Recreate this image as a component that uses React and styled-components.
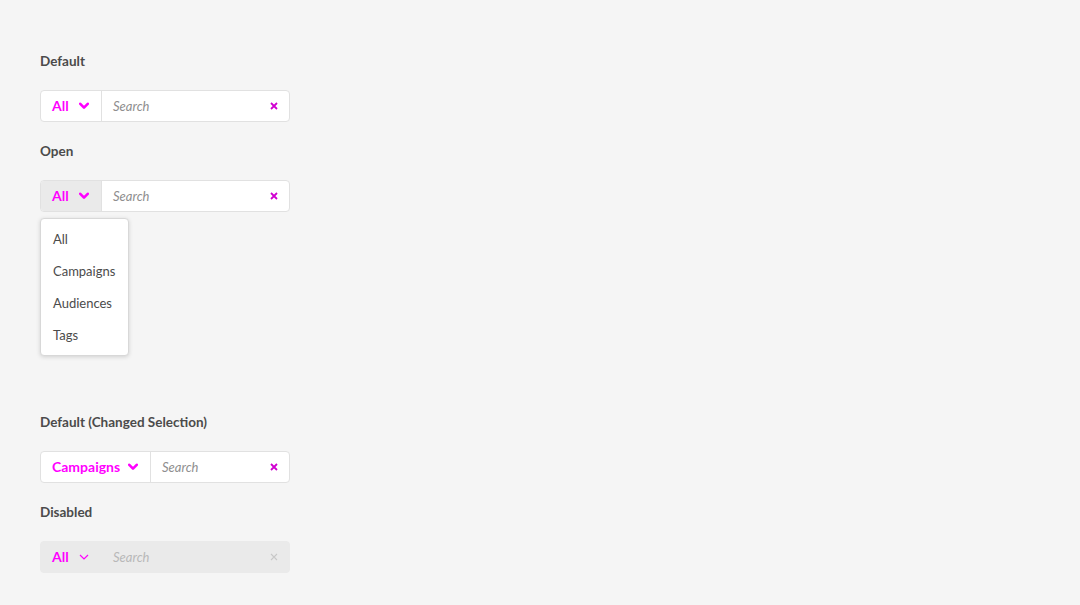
import React from "react";
import styled, { createGlobalStyle, css } from "styled-components";

const Global = createGlobalStyle`
  html, body { margin: 0; padding: 0; background: #f5f5f5; }
  body { font-family: Lato, "Open Sans", sans-serif; }
`;

const Page = styled.div`
  padding: 52px 40px;
  display: flex;
  flex-direction: column;
  gap: 20px;
`;

const Label = styled.div`
  font-size: 13.5px;
  font-weight: 700;
  color: #4b4b4b;
  line-height: 18px;
  height: 18px;
`;

const Section = styled.div`
  position: relative;
  width: 250px;
  ${(p) => p.$reserve && css`margin-bottom: ${p.$reserve}px;`}
`;

const Group = styled.div`
  display: flex;
  height: 32px;
  box-sizing: border-box;
  border: 1px solid ${(p) => (p.$disabled ? "#eaeaea" : "#e1e1e1")};
  border-radius: 4px;
  background: ${(p) => (p.$disabled ? "#eaeaea" : "#fff")};
  overflow: hidden;
`;

const Picker = styled.button`
  all: unset;
  box-sizing: border-box;
  display: flex;
  align-items: center;
  justify-content: space-between;
  width: ${(p) => p.$w}px;
  padding: 0 12px 0 11px;
  border-right: 1px solid ${(p) => (p.$disabled ? "#eaeaea" : "#e1e1e1")};
  background: ${(p) => (p.$open ? "#eaeaea" : "transparent")};
  font-family: Lato, sans-serif;
  font-size: 14px;
  font-weight: 700;
  color: #f0f;
  line-height: 30px;
`;

const SearchBox = styled.div`
  flex: 1;
  display: flex;
  align-items: center;
  justify-content: space-between;
  padding: 0 11px 0 11px;
`;

const Placeholder = styled.span`
  font-family: Lato, sans-serif;
  font-style: italic;
  font-size: 13px;
  color: ${(p) => (p.$disabled ? "#b8b8b8" : "#8e8e8e")};
`;

const Menu = styled.div`
  position: absolute;
  top: 38px;
  left: 0;
  width: 89px;
  box-sizing: border-box;
  background: #fff;
  border: 1px solid #d8d8d8;
  border-radius: 4px;
  box-shadow: 0 1px 4px rgba(0, 0, 0, 0.15);
  padding: 4px 0;
`;

const Item = styled.div`
  height: 32px;
  line-height: 32px;
  padding-left: 12px;
  font-size: 13px;
  color: #4b4b4b;
  white-space: nowrap;
`;

const Chevron = ({ outline }) => (
  <svg width="10" height="8" viewBox="0 0 10 8">
    {outline ? (
      <path d="M1 2 L5 6 L9 2" fill="none" stroke="#f0f" strokeWidth="1.2" />
    ) : (
      <path d="M1.3 1.8 L5 5.6 L8.7 1.8" fill="none" stroke="#f0f" strokeWidth="2.6" strokeLinecap="round" strokeLinejoin="round" />
    )}
  </svg>
);

const Clear = ({ disabled }) => (
  <svg width="8" height="8" viewBox="0 0 8 8">
    <path d="M1 1 L7 7 M7 1 L1 7" stroke={disabled ? "#c8c8c8" : "#d000d0"} strokeWidth={disabled ? 1.1 : 1.8} />
  </svg>
);

const SearchGroup = ({ value, width, open, disabled }) => (
  <Group $disabled={disabled}>
    <Picker $w={width} $open={open} $disabled={disabled}>
      <span>{value}</span>
      <Chevron outline={disabled} />
    </Picker>
    <SearchBox>
      <Placeholder $disabled={disabled}>Search</Placeholder>
      <Clear disabled={disabled} />
    </SearchBox>
  </Group>
);

export default function App() {
  return (
    <>
      <Global />
      <Page>
        <Label>Default</Label>
        <Section>
          <SearchGroup value="All" width={61} />
        </Section>
        <Label>Open</Label>
        <Section $reserve={181}>
          <SearchGroup value="All" width={61} open />
          <Menu>
            <Item>All</Item>
            <Item>Campaigns</Item>
            <Item>Audiences</Item>
            <Item>Tags</Item>
          </Menu>
        </Section>
        <Label>Default (Changed Selection)</Label>
        <Section>
          <SearchGroup value="Campaigns" width={110} />
        </Section>
        <Label>Disabled</Label>
        <Section>
          <SearchGroup value="All" width={61} disabled />
        </Section>
      </Page>
    </>
  );
}
